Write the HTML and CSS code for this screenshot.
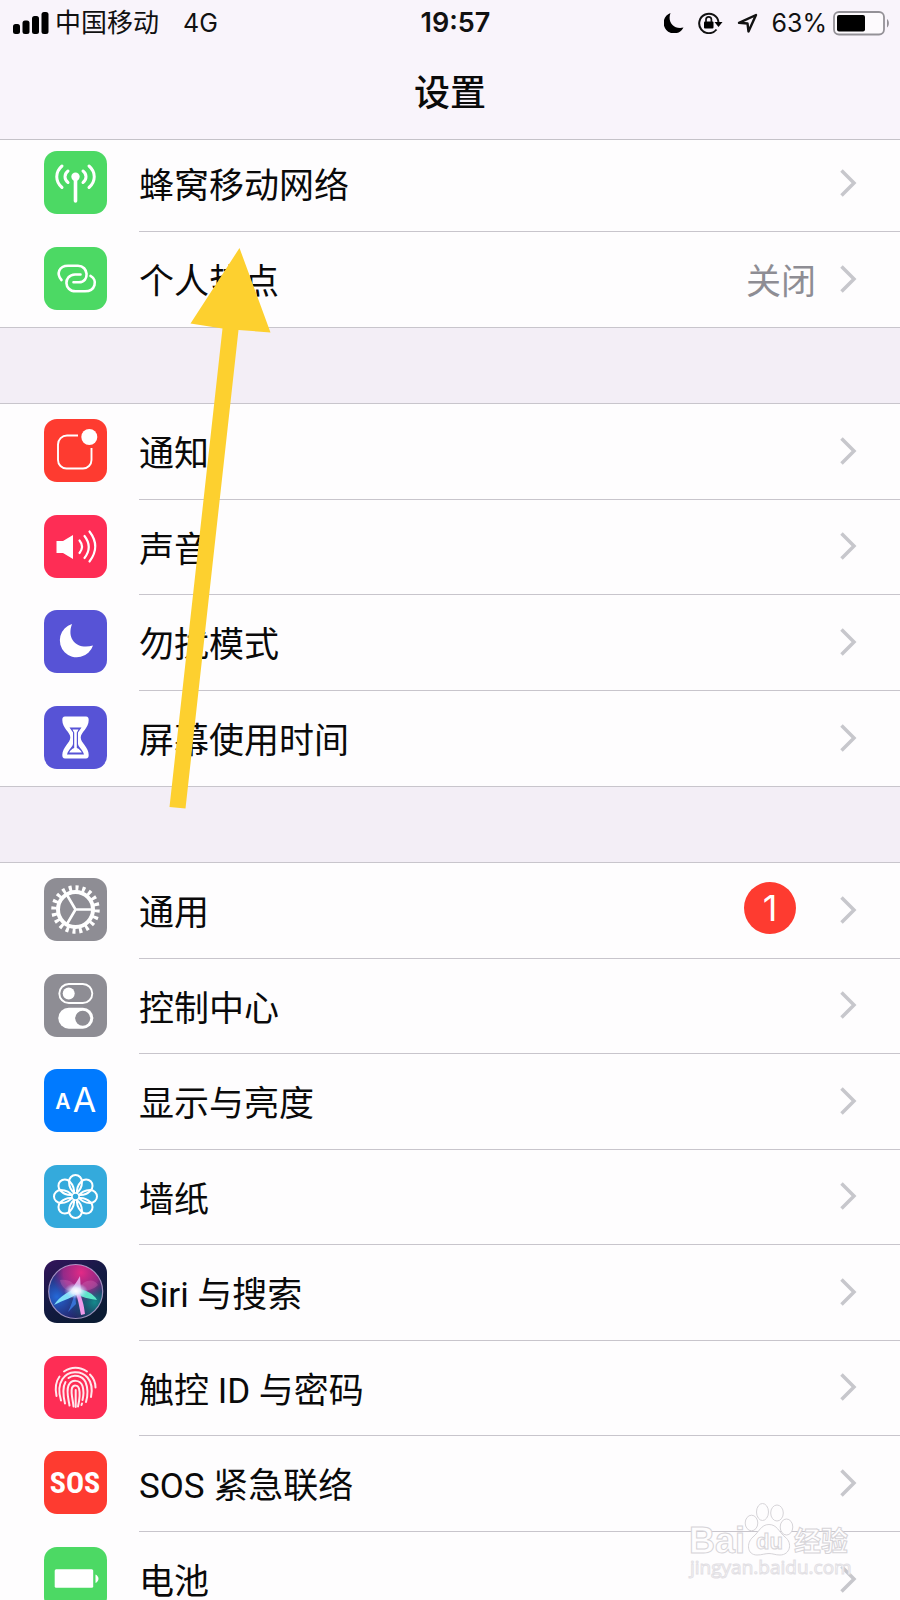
FILE: index.html
```html
<!DOCTYPE html>
<html lang="zh-CN">
<head>
<meta charset="utf-8">
<meta name="viewport" content="width=device-width, initial-scale=1">
<title>设置</title>
<link rel="stylesheet" href="styles.css">
</head>
<body>
<div class="screen">
  <header class="header">
    <div class="status">
      <div class="status-side">
        <svg class="signal" width="36" height="23" viewBox="0 0 36 23" aria-hidden="true"><rect x="0" y="12" width="7" height="10" rx="2.5"/><rect x="9.5" y="8.500" width="7" height="13.500" rx="2.500"/><rect x="19" y="4" width="7" height="18" rx="2.500"/><rect x="28.500" y="0" width="7" height="22" rx="2.500"/></svg>
        <span>中国移动</span>
        <span class="network">4G</span>
      </div>
      <time class="clock">19:57</time>
      <div class="status-side status-right">
        <svg width="20" height="20" viewBox="0 0 20 20" aria-hidden="true"><path d="M6.500 0A10.500 10.500 0 1 0 19.500 14.500C10 17 3 9 6.500 0z"/></svg>
        <svg class="lock" width="25" height="22" viewBox="0 0 25 22" aria-hidden="true"><path d="M18.500 17.500A9.700 9.700 0 1 1 20.500 10" fill="none" stroke="#111" stroke-width="2"/><path d="M16.500 10h8l-4 5z"/><rect x="6" y="9.500" width="9.500" height="7" rx="1"/><path d="M8 10V7.500a2.700 2.700 0 0 1 5.400 0V10" fill="none" stroke="#111" stroke-width="1.700"/></svg>
        <svg class="location" width="21" height="21" viewBox="0 0 21 21" aria-hidden="true"><path d="M2 9.800L19 2 11.500 18.500 10.500 10.500z" fill="none" stroke="#111" stroke-width="2.400" stroke-linejoin="round"/></svg>
        <span>63%</span>
        <svg class="battery" width="57" height="25" viewBox="0 0 57 25" aria-hidden="true"><rect x="1" y="1" width="50" height="22.500" rx="5" fill="#fdfafd" stroke="#949197" stroke-width="1.800"/><rect x="4" y="4" width="28" height="16.500" rx="2"/><path d="M54 8c2.500 1.500 2.500 7 0 8.500z" fill="#949197"/></svg>
      </div>
    </div>
    <h1 class="title">设置</h1>
  </header>

  <main class="list">
    <ul class="group">
      <li><a class="row" href="#cellular">
        <svg class="icon green" viewBox="0 0 63 63" aria-hidden="true"><g fill="none" stroke="#fff" stroke-width="3" stroke-linecap="round"><path d="M31.500 27V50" stroke-width="3.600"/><path d="M24 20c-4 3-4 8.500 0 11.500M39 20c4 3 4 8.500 0 11.500M18 15c-7 6-7 15.500 0 21.500M45 15c7 6 7 15.500 0 21.500"/></g><circle cx="31.500" cy="25.700" r="4.200" fill="#fff"/></svg>
        <span class="body"><span class="label">蜂窝移动网络</span><svg class="chevron" viewBox="0 0 17 28" aria-hidden="true"><path d="M1.500 1.500L14 14 1.500 26.500"/></svg></span></a></li>
      <li><a class="row" href="#hotspot">
        <svg class="icon green" viewBox="0 0 63 63" aria-hidden="true"><g fill="none" stroke="#fff" stroke-width="2.600" stroke-linecap="round"><path d="M17.500 33C12 27 15 18.700 24 18.700H34C44.500 18.700 46 35 35 35.300H29.500"/><path d="M36.500 27.500H31C19 28 20 44.300 31.500 44.300H41C51.500 44.300 54 33 46.500 28.800"/></g></svg>
        <span class="body"><span class="label">个人热点</span><span class="value">关闭</span><svg class="chevron" viewBox="0 0 17 28" aria-hidden="true"><path d="M1.500 1.500L14 14 1.500 26.500"/></svg></span></a></li>
    </ul>

    <ul class="group">
      <li><a class="row" href="#notifications">
        <svg class="icon red" viewBox="0 0 63 63" aria-hidden="true"><path d="M34 16.500H23a9 9 0 0 0-9 9V41a8.500 8.500 0 0 0 8.500 8.500H39A8.500 8.500 0 0 0 47.500 41V29" fill="none" stroke="#fff" stroke-width="1.900"/><circle cx="45.300" cy="18" r="8" fill="#fff"/></svg>
        <span class="body"><span class="label">通知</span><svg class="chevron" viewBox="0 0 17 28" aria-hidden="true"><path d="M1.500 1.500L14 14 1.500 26.500"/></svg></span></a></li>
      <li><a class="row" href="#sounds">
        <svg class="icon pink" viewBox="0 0 63 63" aria-hidden="true"><path d="M12.500 26h6.500L29 20v24l-10-6h-6.500z" fill="#fff"/><g fill="none" stroke="#fff" stroke-width="2.200" stroke-linecap="round"><path d="M35.500 25.500q5 6 0 12.500"/><path d="M40.500 21q8.500 11 0 22"/><path d="M45.500 16.500q11.500 15 0 30"/></g></svg>
        <span class="body"><span class="label">声音</span><svg class="chevron" viewBox="0 0 17 28" aria-hidden="true"><path d="M1.500 1.500L14 14 1.500 26.500"/></svg></span></a></li>
      <li><a class="row" href="#dnd">
        <svg class="icon indigo" viewBox="0 0 63 63" aria-hidden="true"><path d="M28 14A17 17 0 1 0 49 35.500C34 40 22 30 28 14z" fill="#fff"/></svg>
        <span class="body"><span class="label">勿扰模式</span><svg class="chevron" viewBox="0 0 17 28" aria-hidden="true"><path d="M1.500 1.500L14 14 1.500 26.500"/></svg></span></a></li>
      <li><a class="row" href="#screentime">
        <svg class="icon indigo" viewBox="0 0 63 63" aria-hidden="true"><path d="M21 10.500h21c2 0 2.700 1.500 2.700 3.500c0 8.500-8 12-8 17.500s8 9.500 8 17.500c0 2-.7 3.500-2.700 3.500h-21c-2 0-2.700-1.500-2.700-3.500c0-8 8-12 8-17.500s-8-9-8-17.500c0-2 .7-3.500 2.700-3.500z" fill="#fff"/><path d="M25.500 21.500h12l-3.500 5v11c0 3.500 4.500 5.500 6 11h-17c1.500-5.500 6-7.500 6-11v-11z" fill="#5753d6"/><path d="M28.500 23.500h6l-1.700 3v15.500c2.500 1 4 2.500 5 4.500h-12.600c1-2 2.500-3.500 5-4.500V26.500z" fill="#fff"/></svg>
        <span class="body"><span class="label">屏幕使用时间</span><svg class="chevron" viewBox="0 0 17 28" aria-hidden="true"><path d="M1.500 1.500L14 14 1.500 26.500"/></svg></span></a></li>
    </ul>

    <ul class="group">
      <li><a class="row" href="#general">
        <svg class="icon gray" viewBox="0 0 63 63" aria-hidden="true"><g fill="none" stroke="#fff"><circle cx="31.500" cy="31.500" r="17.500" stroke-width="4"/><circle cx="31.500" cy="31.500" r="21.500" stroke-width="5.500" pathLength="40" stroke-dasharray="0.900 1.100"/><path d="M31.500 31.500H48M31.500 31.500L23 17M31.500 31.500L23 46" stroke-width="2.600"/></g></svg>
        <span class="body"><span class="label">通用</span><span class="badge">1</span><svg class="chevron" viewBox="0 0 17 28" aria-hidden="true"><path d="M1.500 1.500L14 14 1.500 26.500"/></svg></span></a></li>
      <li><a class="row" href="#control">
        <svg class="icon gray" viewBox="0 0 63 63" aria-hidden="true"><rect x="15.300" y="10" width="33" height="19" rx="9.500" fill="none" stroke="#fff" stroke-width="1.900"/><circle cx="24.700" cy="19.500" r="6" fill="#fff"/><rect x="14.300" y="33.700" width="35" height="21" rx="10.500" fill="#fff"/><circle cx="38.700" cy="44.200" r="7.500" fill="#8e8d94"/></svg>
        <span class="body"><span class="label">控制中心</span><svg class="chevron" viewBox="0 0 17 28" aria-hidden="true"><path d="M1.500 1.500L14 14 1.500 26.500"/></svg></span></a></li>
      <li><a class="row" href="#display">
        <svg class="icon blue" viewBox="0 0 63 63" aria-hidden="true"><text class="glyph glyph-small" x="19" y="39.500">A</text><text class="glyph glyph-large" x="40.500" y="42.500">A</text></svg>
        <span class="body"><span class="label">显示与亮度</span><svg class="chevron" viewBox="0 0 17 28" aria-hidden="true"><path d="M1.500 1.500L14 14 1.500 26.500"/></svg></span></a></li>
      <li><a class="row" href="#wallpaper">
        <svg class="icon sky" viewBox="0 0 63 63" aria-hidden="true"><defs><path id="petal" d="M31.500 29C27 26 25 21 25 16.800a6.500 6.800 0 0 1 13 0C38 21 36 26 31.500 29z"/></defs><g fill="none" stroke="#fff" stroke-width="2"><use href="#petal"/><use href="#petal" transform="rotate(45 31.500 31.500)"/><use href="#petal" transform="rotate(90 31.500 31.500)"/><use href="#petal" transform="rotate(135 31.500 31.500)"/><use href="#petal" transform="rotate(180 31.500 31.500)"/><use href="#petal" transform="rotate(225 31.500 31.500)"/><use href="#petal" transform="rotate(270 31.500 31.500)"/><use href="#petal" transform="rotate(315 31.500 31.500)"/></g><circle cx="31.500" cy="31.500" r="3.500" fill="#34aadc" stroke="#fff" stroke-width="1.500"/></svg>
        <span class="body"><span class="label">墙纸</span><svg class="chevron" viewBox="0 0 17 28" aria-hidden="true"><path d="M1.500 1.500L14 14 1.500 26.500"/></svg></span></a></li>
      <li><a class="row" href="#siri">
        <svg class="icon" viewBox="0 0 63 63" aria-hidden="true"><defs>
          <linearGradient id="siriBg" x1="0" y1="0" x2="0.600" y2="1"><stop offset="0" stop-color="#35145c"/><stop offset="0.500" stop-color="#151a45"/><stop offset="1" stop-color="#0b1b33"/></linearGradient>
          <radialGradient id="siriPink" cx="0.600" cy="0.150" r="0.550"><stop offset="0" stop-color="#e32a86"/><stop offset="0.600" stop-color="#b02a8e" stop-opacity="0.800"/><stop offset="1" stop-color="#702a8e" stop-opacity="0"/></radialGradient>
          <radialGradient id="siriBlue" cx="0.150" cy="0.600" r="0.600"><stop offset="0" stop-color="#2469d8"/><stop offset="1" stop-color="#2450b8" stop-opacity="0"/></radialGradient>
          <radialGradient id="siriTeal" cx="0.850" cy="0.700" r="0.500"><stop offset="0" stop-color="#148a8c"/><stop offset="1" stop-color="#14606c" stop-opacity="0"/></radialGradient>
          <radialGradient id="siriGlow"><stop offset="0" stop-color="#fff"/><stop offset="0.400" stop-color="#e9f0ff" stop-opacity="0.900"/><stop offset="1" stop-color="#a8c8ff" stop-opacity="0"/></radialGradient></defs>
          <rect width="63" height="63" fill="url(#siriBg)"/><circle cx="31.700" cy="31.500" r="27" fill="#241a58"/><circle cx="31.700" cy="31.500" r="27" fill="url(#siriBlue)"/><circle cx="31.700" cy="31.500" r="27" fill="url(#siriTeal)"/><circle cx="31.700" cy="31.500" r="27" fill="url(#siriPink)"/>
          <path d="M16 20C26 19 30 23 33 30C40 19 50 18 54 25C50 29 44 31 33 32C22 32 17 27 16 20z" fill="#d976c0" opacity="0.300"/>
          <path d="M34 28C26 30 16 36 10 45C20 40 29 37 36 33z" fill="#7fe0f8"/><path d="M32 28C42 30 50 34 53 40C45 39 37 37 31 33z" fill="#5ce6c8"/><path d="M31 31C34 38 35 46 37 55L41 54C40 45 38 37 34 31z" fill="#ee9bea"/><path d="M36 16C33 22 29 26 27 31L37 32z" fill="#e9b0ee" opacity="0.900"/><path d="M31 32C29 40 27 46 24 52L32 44z" fill="#3d7ee8" opacity="0.800"/>
          <ellipse cx="32" cy="31" rx="12" ry="8" fill="url(#siriGlow)"/><circle cx="31.700" cy="31.500" r="27" fill="none" stroke="#c9b4e0" stroke-opacity="0.750" stroke-width="1.200"/></svg>
        <span class="body"><span class="label">Siri 与搜索</span><svg class="chevron" viewBox="0 0 17 28" aria-hidden="true"><path d="M1.500 1.500L14 14 1.500 26.500"/></svg></span></a></li>
      <li><a class="row" href="#touchid">
        <svg class="icon pink" viewBox="0 0 63 63" aria-hidden="true"><g fill="none" stroke="#ffe9ee" stroke-width="2" stroke-linecap="round"><path d="M12.500 40C11 33 11.500 26 15.500 20.500"/><path d="M20 15.500C27 10.500 36 10.500 43 15.500"/><path d="M46 18.500C50 22.500 51.500 27 51.500 31.500"/><path d="M17 44.500C15 38 14.500 29 18.500 23C24 14.500 37 14 43.500 21.500C48 27 48.500 34 47 41"/><path d="M21 47.500C19.500 41 18 32 21.500 26M24.500 22C30 17.500 38.500 20 41.500 26C44 32 44 39 42 46"/><path d="M25.500 49.500C24.500 43 22 35 24.500 29.500C27.500 23 36 23.500 38.500 30C40 35 39.500 40 38.500 44"/><path d="M29.500 50.500C29 44 26.500 37 28 32C29.500 28.500 34 29 35 32.500C36.500 38 35.500 44 34 50.500"/><path d="M31.700 34V51"/><path d="M38 47.500L37.500 49"/></g></svg>
        <span class="body"><span class="label">触控 ID 与密码</span><svg class="chevron" viewBox="0 0 17 28" aria-hidden="true"><path d="M1.500 1.500L14 14 1.500 26.500"/></svg></span></a></li>
      <li><a class="row" href="#sos">
        <svg class="icon red" viewBox="0 0 63 63" aria-hidden="true"><text class="glyph glyph-sos" x="31" y="42">SOS</text></svg>
        <span class="body"><span class="label">SOS 紧急联络</span><svg class="chevron" viewBox="0 0 17 28" aria-hidden="true"><path d="M1.500 1.500L14 14 1.500 26.500"/></svg></span></a></li>
      <li><a class="row" href="#battery">
        <svg class="icon green" viewBox="0 0 63 63" aria-hidden="true"><rect x="10.700" y="22.300" width="38.500" height="18.500" rx="1.500" fill="#fff"/><path d="M51.500 27.500c4 2 4 6.500 0 8.500z" fill="#fff"/></svg>
        <span class="body"><span class="label">电池</span><svg class="chevron" viewBox="0 0 17 28" aria-hidden="true"><path d="M1.500 1.500L14 14 1.500 26.500"/></svg></span></a></li>
    </ul>
  </main>

  <svg class="arrow" width="104" height="564" viewBox="168 247 104 564" aria-hidden="true"><path d="M239.500 248L270.500 332.500 238.500 330 185.500 808.500 169.500 807 222.500 328.500 190.500 323.500z" fill="#fdd02f"/></svg>

  <svg class="watermark" width="190" height="105" viewBox="0 0 190 105" aria-hidden="true">
    <ellipse cx="76.500" cy="33" rx="6.300" ry="7.800"/><ellipse cx="87.500" cy="22" rx="6" ry="8.500"/><ellipse cx="102" cy="23" rx="6.300" ry="8"/><ellipse cx="111.500" cy="37" rx="6.300" ry="8"/><path d="M94 34.500C102 34.500 104 42 110 47C118 53 115 65 105 65C100 65 98 63.500 94 63.500S87 65 82 65C72 65 71 53 78 47C84 42 86 34.500 94 34.500z"/>
    <text class="wm-logo" x="14" y="63">Bai</text>
    <text class="wm-du" x="81" y="59">du</text>
    <text class="wm-cn" x="119" y="61">经验</text>
    <text class="wm-url" x="15" y="84">jingyan.baidu.com</text>
  </svg>
</div>
</body>
</html>
```
FILE: styles.css
```css
* { box-sizing: border-box; }

body {
  margin: 0;
  color: #0a0a0a;
  background: #f3eef6;
  font-family: Roboto, "Noto Sans CJK SC", sans-serif;
}

.screen {
  position: relative;
  height: 100vh;
  overflow: hidden;
}

.header {
  position: relative;
  z-index: 1;
  height: 140px;
  background: #f9f4fb;
  border-bottom: 1px solid #c5c2c8;
}

.status {
  display: flex;
  align-items: center;
  height: 46px;
  padding: 0 10px 0 13px;
  color: #111;
  font-family: Inter, "Noto Sans CJK SC", sans-serif;
  font-size: 26px;
  line-height: 32px;
}

.status-side {
  display: flex;
  flex: 1;
  align-items: center;
}

.status-right { justify-content: flex-end; }
.signal { margin-right: 6px; }
.network { margin-left: 24px; font-size: 25px; }
.clock { padding-left: 8px; font-size: 27px; font-weight: 600; }
.lock { margin-left: 14px; }
.location { margin: 0 14px; }
.status-right span { font-size: 25px; }
.battery { margin-left: 6px; }

.title {
  margin: 22px 0 0;
  font-size: 36px;
  font-weight: 500;
  line-height: 52px;
  text-align: center;
}

/* The list is scrolled slightly beneath the header. */
.list { margin-top: -4px; }

.group {
  margin: 0 0 75px;
  padding: 0;
  list-style: none;
  background: #fefdfe;
  border-bottom: 1px solid #c8c5cc;
}

.group + .group { border-top: 1px solid #c8c5cc; }

.row {
  display: flex;
  align-items: center;
  height: 96px;
  padding-left: 44px;
  color: inherit;
  text-decoration: none;
}

li:nth-child(even) .row { height: 95px; }

.icon {
  flex: none;
  width: 63px;
  height: 63px;
  margin-bottom: 3px;
  border-radius: 13px;
}

.green { background: #4cd964; }
.red { background: #fe3b30; }
.pink { background: #fe2d55; }
.indigo { background: #5753d6; }
.gray { background: #8e8d94; }
.blue { background: #007aff; }
.sky { background: #34aadc; }

.body {
  display: flex;
  flex: 1;
  align-items: center;
  align-self: stretch;
  margin-left: 32px;
  padding: 0 43px 2px 0;
  border-bottom: 1px solid #c8c5cc;
}

li:last-child .body { border-bottom: 0; }

.label,
.value {
  padding-top: 9px;
  font-size: 35px;
  line-height: 52px;
}

.label { flex: 1; }
.value { color: #8e8d94; }

.chevron {
  flex: none;
  width: 17px;
  height: 28px;
  margin-left: 24px;
  fill: none;
  stroke: #c7c7cc;
  stroke-width: 3.5;
}

.badge {
  width: 52px;
  height: 52px;
  margin: 0 20px 4px 0;
  border-radius: 50%;
  color: #fff;
  background: #fe3b30;
  font-family: Inter, sans-serif;
  font-size: 36px;
  line-height: 52px;
  text-align: center;
}

.glyph {
  fill: #fff;
  font-family: Inter, sans-serif;
  text-anchor: middle;
}

.glyph-small { font-size: 21px; font-weight: 600; }
.glyph-large { font-size: 34px; }
.glyph-sos {
  font-family: "Liberation Sans Narrow", "Roboto Condensed", "Open Sans Condensed", Roboto, sans-serif;
  font-size: 30px;
  font-weight: 700;
}

.arrow {
  position: absolute;
  z-index: 2;
  top: 247px;
  left: 168px;
}

.watermark {
  position: absolute;
  z-index: 2;
  right: 35px;
  bottom: 5px;
  fill: #fefdfe;
  stroke: #d6d4d8;
  stroke-width: 1;
}

.wm-logo,
.wm-du,
.wm-cn {
  font-family: "Liberation Sans", "Noto Sans CJK SC", sans-serif;
  font-weight: 700;
}

.wm-logo { font-size: 36px; }
.wm-du { font-size: 22px; }
.wm-cn { font-size: 27px; }

.wm-url {
  font-family: "Open Sans", sans-serif;
  font-size: 19px;
  stroke: #e2e0e4;
}
```
